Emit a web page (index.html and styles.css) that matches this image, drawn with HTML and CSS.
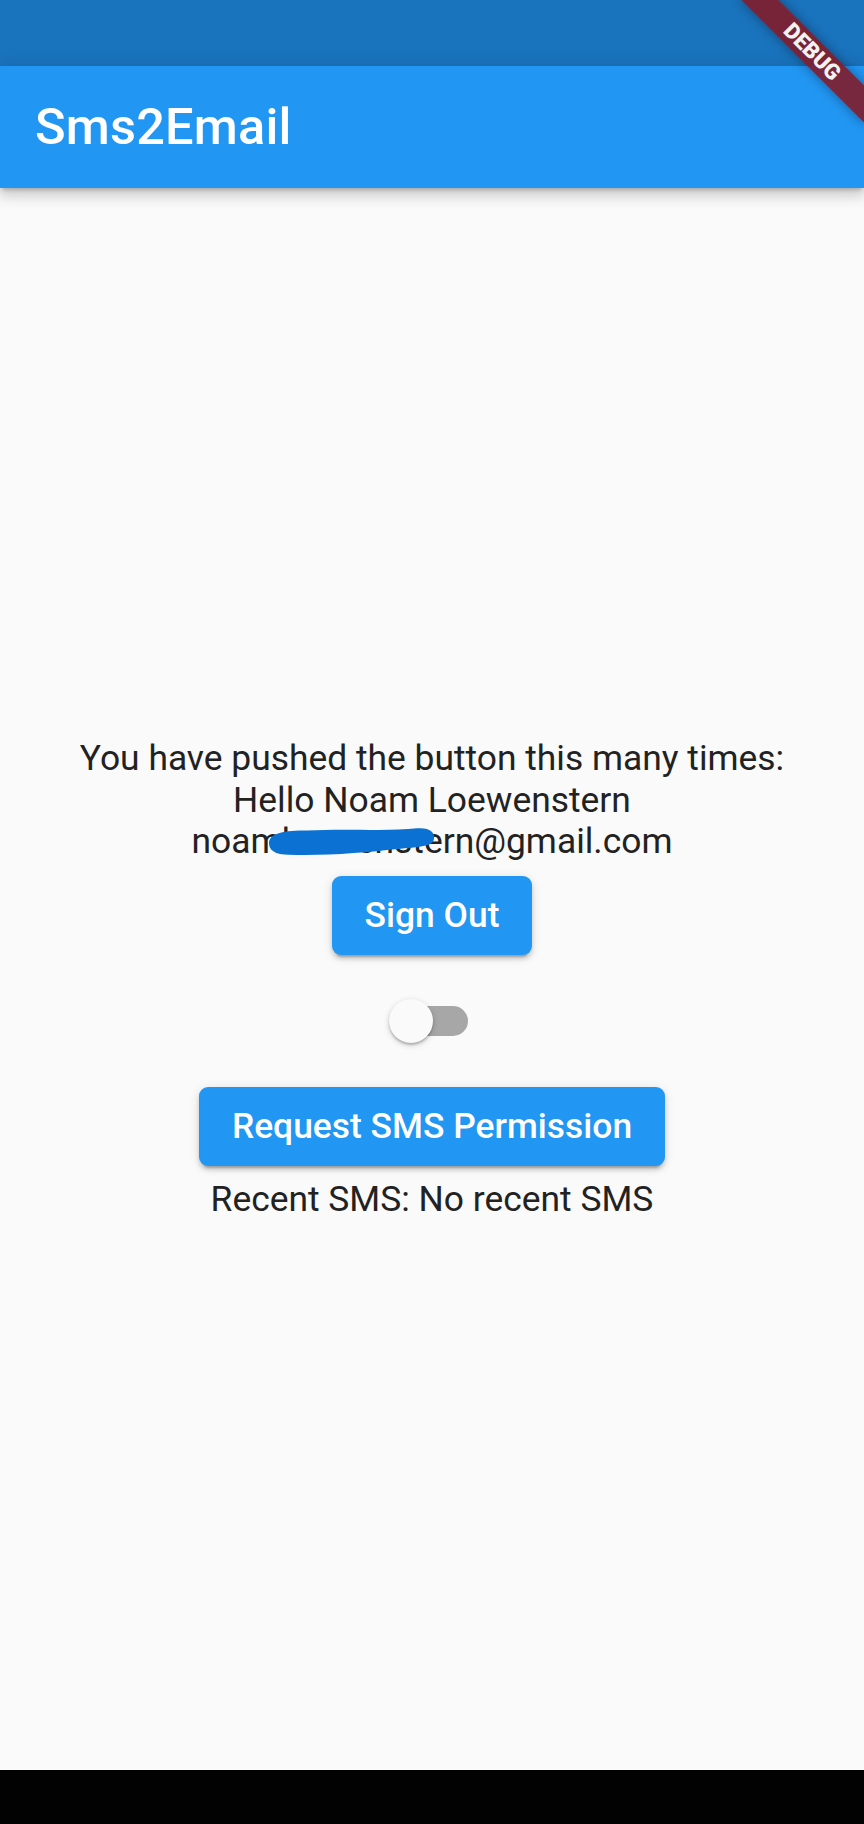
FILE: index.html
```html
<!DOCTYPE html>
<html lang="en">
<head>
<meta charset="utf-8">
<title>Sms2Email</title>
<link rel="stylesheet" href="styles.css">
</head>
<body>
<div class="screen">
  <div class="status-bar"></div>
  <header class="app-bar"><h1 class="app-title">Sms2Email</h1></header>
  <main class="content">
    <div class="column">
      <p class="line">You have pushed the button this many times:</p>
      <p class="line">Hello Noam Loewenstern</p>
      <p class="line email">noam<span class="redact">loewen<svg class="scribble" viewBox="0 0 168 26" preserveAspectRatio="none"><path d="M2 15 C2 6 18 4 40 4 C80 2 120 5 150 2 C162 1 168 5 167 11 C166 18 152 18 130 20 C100 23 60 26 22 25 C8 25 2 21 2 15 Z" fill="#0b72d4"/></svg></span>stern@gmail.com</p>
      <div class="btn-slot"><button class="btn">Sign Out</button></div>
      <div class="switch-slot">
        <div class="switch"><div class="track"></div><div class="thumb"></div></div>
      </div>
      <div class="btn-slot"><button class="btn">Request SMS Permission</button></div>
      <p class="line">Recent SMS: No recent SMS</p>
    </div>
  </main>
  <div class="nav-bar"></div>
  <div class="debug-banner">DEBUG</div>
</div>
</body>
</html>
```

FILE: styles.css
```css
* { box-sizing: border-box; }
html, body {
  margin: 0;
  padding: 0;
  background: #000;
}
.screen {
  position: relative;
  width: 864px;
  height: 1824px;
  overflow: hidden;
  display: flex;
  flex-direction: column;
  background: #fafafa;
  font-family: Roboto, "Noto Sans", sans-serif;
}
.status-bar {
  height: 66px;
  flex: none;
  background: #1a73bd;
}
.app-bar {
  height: 122px;
  flex: none;
  background: #2196f3;
  display: flex;
  align-items: center;
  padding-left: 35px;
  box-shadow: 0 4px 4px -2px rgba(0,0,0,0.2), 0 8px 11px 1px rgba(0,0,0,0.12), 0 2px 20px 2px rgba(0,0,0,0.08);
  position: relative;
  z-index: 2;
}
.app-title {
  margin: 0;
  color: #fff;
  font-size: 50.5px;
  font-weight: 500;
  line-height: 1;
  letter-spacing: 0.2px;
}
.content {
  flex: 1;
  display: flex;
  align-items: center;
  justify-content: center;
}
.column {
  display: flex;
  flex-direction: column;
  align-items: center;
}
.line {
  margin: 0;
  font-size: 35.4px;
  line-height: 41.5px;
  color: #222;
  text-align: center;
}
.redact {
  position: relative;
}
.scribble {
  position: absolute;
  left: -15px;
  top: 6px;
  width: 168px;
  height: 30px;
}
.btn-slot {
  padding: 13px 0;
}
.btn {
  height: 79px;
  padding: 0 33px;
  border: none;
  border-radius: 9px;
  background: #2196f3;
  color: #fff;
  font-family: Roboto, "Noto Sans", sans-serif;
  font-size: 35.4px;
  font-weight: 500;
  letter-spacing: 0;
  box-shadow: 0 6px 2px -4px rgba(0,0,0,0.2), 0 4px 4px 0 rgba(0,0,0,0.14), 0 2px 11px 0 rgba(0,0,0,0.12);
}
.switch-slot {
  height: 106px;
  display: flex;
  align-items: center;
  justify-content: center;
}
.switch {
  position: relative;
  width: 72px;
  height: 30px;
}
.track {
  width: 72px;
  height: 30px;
  border-radius: 15px;
  background: #a7a7a7;
}
.thumb {
  position: absolute;
  left: -7px;
  top: -7px;
  width: 44px;
  height: 44px;
  border-radius: 50%;
  background: #fafafa;
  box-shadow: 0 2px 2px rgba(0,0,0,0.2), 0 2px 6px rgba(0,0,0,0.18);
}
.nav-bar {
  height: 54px;
  flex: none;
  background: #020202;
}
.debug-banner {
  position: absolute;
  left: 725px;
  top: 39px;
  width: 174px;
  height: 26px;
  transform: rotate(45deg);
  background: rgba(130, 28, 42, 0.9);
  box-shadow: 0 0 12px rgba(0,0,0,0.4);
  color: #f2f2f2;
  font-family: Roboto, "Noto Sans", sans-serif;
  font-size: 22px;
  font-weight: 900;
  line-height: 26px;
  text-align: center;
  z-index: 5;
}
```
